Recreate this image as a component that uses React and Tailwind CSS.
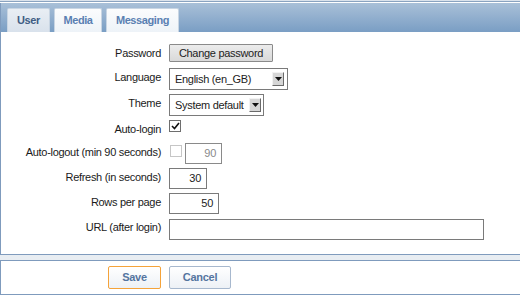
import React from "react";

function Arrow() {
  return (
    <span className="flex h-[14px] w-[12px] items-center justify-center border border-t-[#f2f2f2] border-l-[#f2f2f2] border-r-[#6a6a6a] border-b-[#6a6a6a] bg-[#d6d6d6]">
      <svg width="7" height="4" viewBox="0 0 7 4"><path d="M0 0h7L3.5 4z" fill="#111" /></svg>
    </span>
  );
}

function Row({ label, h, children, pt = "pt-[4px]" }) {
  return (
    <div className={`flex items-start ${h}`}>
      <div className={`w-[160px] shrink-0 text-right leading-[14px] text-[#1a1a1a] ${pt}`}>{label}</div>
      <div className="ml-[8px] flex items-start">{children}</div>
    </div>
  );
}

export default function App() {
  return (
    <div className="h-[295px] w-[520px] overflow-hidden bg-white text-[11px] tracking-[-0.3px]" style={{ fontFamily: '"Liberation Sans", Arial, sans-serif' }}>
      <div className="h-[1px] bg-[#dbe3ec]" />
      <div className="h-[1px] bg-[#8aa3c0]" />
      <div className="h-[1px] bg-white" />
      <div className="flex h-[29px] items-end gap-[4px] border-l border-[#7f9bbd] bg-gradient-to-b from-[#a9c0d8] to-[#7a9ec4] pl-[6px] tracking-[-0.4px]">
        <div className="flex h-[24px] w-[43px] items-center justify-center rounded-t-[2px] border border-b-0 border-[#c8d5e3] bg-gradient-to-b from-[#e9eef4] to-[#d9e2ec] font-bold text-[#3f5d84]">User</div>
        <div className="flex h-[24px] w-[48px] items-center justify-center rounded-t-[2px] border border-b-0 border-[#c8d5e3] bg-gradient-to-b from-[#fbfcfd] to-[#eef3f8] font-bold text-[#5a80b2]">Media</div>
        <div className="flex h-[24px] w-[73px] items-center justify-center rounded-t-[2px] border border-b-0 border-[#c8d5e3] bg-gradient-to-b from-[#fbfcfd] to-[#eef3f8] font-bold text-[#5a80b2]">Messaging</div>
      </div>
      <div className="flex h-[223px] flex-col border-b border-l border-[#7f9bbd] pt-[10px]">
        <Row label="Password" h="h-[25px]" pt="pt-[4px]">
          <button className="mt-[2px] flex h-[18px] w-[104px] items-center justify-center rounded-[1px] border border-[#8a8a8a] bg-gradient-to-b from-[#ececec] to-[#d9d9d9] text-[#222]">Change password</button>
        </Row>
        <Row label="Language" h="h-[26px]" pt="pt-[3px]">
          <div className="mt-[1px] flex h-[22px] w-[119px] items-center justify-between border border-[#7a7a7a] pl-[5px] pr-[3px] text-[#222]">
            <span>English (en_GB)</span>
            <Arrow />
          </div>
        </Row>
        <Row label="Theme" h="h-[25px]" pt="pt-[3px]">
          <div className="mt-[1px] flex h-[22px] w-[95px] items-center justify-between border border-[#7a7a7a] pl-[5px] pr-[2px] text-[#222]">
            <span>System default</span>
            <Arrow />
          </div>
        </Row>
        <Row label="Auto-login" h="h-[24px]" pt="pt-[4px]">
          <div className="mt-[2px] flex h-[12px] w-[12px] items-center justify-center border border-[#6e6e6e] bg-white">
            <svg width="9" height="8" viewBox="0 0 9 8"><path d="M1 4l2.5 2.5L8 1" stroke="#111" strokeWidth="1.6" fill="none" /></svg>
          </div>
        </Row>
        <Row label="Auto-logout (min 90 seconds)" h="h-[25px]" pt="pt-[3px]">
          <div className="ml-[1px] mt-[3px] h-[12px] w-[12px] border border-[#c6c6c6] bg-white" />
          <div className="ml-[3px] mt-[1px] flex h-[21px] w-[37px] items-center justify-end border border-[#8a8a8a] pr-[5px] text-[#8a8a8a]">90</div>
        </Row>
        <Row label="Refresh (in seconds)" h="h-[25px]" pt="pt-[3px]">
          <div className="mt-[1px] flex h-[21px] w-[38px] items-center justify-end border border-[#7a7a7a] pr-[5px] text-[#222]">30</div>
        </Row>
        <Row label="Rows per page" h="h-[26px]" pt="pt-[3px]">
          <div className="mt-[1px] flex h-[21px] w-[50px] items-center justify-end border border-[#7a7a7a] pr-[5px] text-[#222]">50</div>
        </Row>
        <Row label="URL (after login)" h="h-[24px]" pt="pt-[2px]">
          <div className="mt-[1px] h-[21px] w-[315px] border border-[#7a7a7a]" />
        </Row>
      </div>
      <div className="h-[5px] bg-[#e8edf2]" />
      <div className="flex h-[35px] items-start gap-[8px] border-y border-l border-[#7f9bbd] pl-[107px] pt-[5px]">
        <button className="flex h-[23px] w-[53px] items-center justify-center rounded-[2px] border border-[#f5a33a] bg-gradient-to-b from-white to-[#edf1f6] font-bold text-[#55759f]">Save</button>
        <button className="flex h-[23px] w-[62px] items-center justify-center rounded-[2px] border border-[#a7b8ce] bg-gradient-to-b from-white to-[#edf1f6] font-bold text-[#55759f]">Cancel</button>
      </div>
    </div>
  );
}
